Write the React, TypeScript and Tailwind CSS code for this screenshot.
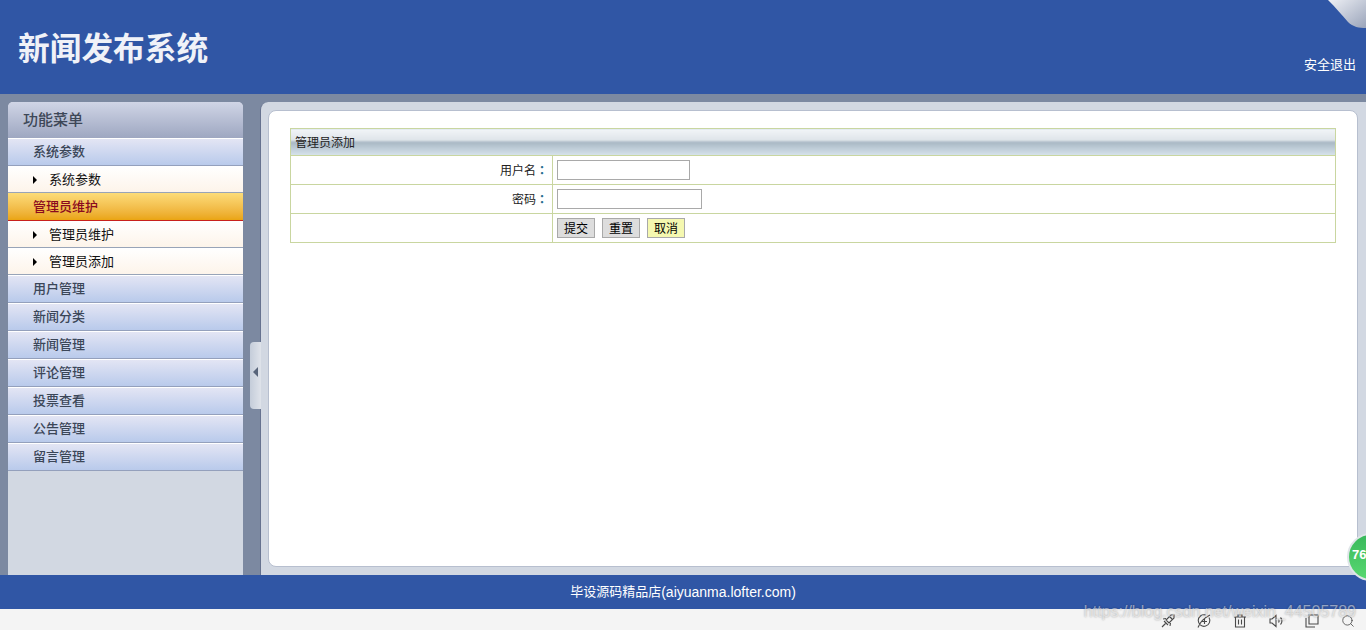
import { Search } from "lucide-react"

const font = "font-['Liberation_Sans','Noto_Sans_CJK_SC',sans-serif]"

function GroupItem({ label, active }: { label: string; active?: boolean }) {
  if (active) {
    return (
      <div className="flex h-[28px] items-center border-b border-[#c8201c] bg-gradient-to-b from-[#fcdc78] to-[#eaa50f] pl-[25px] text-[13px] font-medium text-[#8a0a1e]">
        {label}
      </div>
    )
  }
  return (
    <div className="flex h-[28px] items-center border-t border-t-white border-b border-b-[#94a0bc] bg-gradient-to-b from-[#e3e5f4] to-[#b9caeb] pl-[25px] text-[13px] font-medium text-[#3b4658]">
      {label}
    </div>
  )
}

function SubItem({ label }: { label: string }) {
  return (
    <div className="flex h-[27px] items-center border-b border-[#98a4b8] bg-gradient-to-b from-white to-[#fdf4ea] pt-px pl-[25px] text-[13px] text-[#111111]">
      <span className="mr-[12px] h-0 w-0 border-y-[4px] border-l-[4px] border-y-transparent border-l-black" />
      {label}
    </div>
  )
}

function Sidebar() {
  return (
    <aside className="mt-2 ml-2 w-[235px] shrink-0 overflow-hidden rounded-t-[5px] bg-[#d2d8e2]">
      <div className="flex h-[36px] items-center bg-gradient-to-b from-[#d0d5e6] to-[#9ea7c1] pt-px pl-[15px] text-[15px] font-medium text-[#3d4757]">
        功能菜单
      </div>
      <GroupItem label="系统参数" />
      <SubItem label="系统参数" />
      <GroupItem label="管理员维护" active />
      <SubItem label="管理员维护" />
      <SubItem label="管理员添加" />
      <GroupItem label="用户管理" />
      <GroupItem label="新闻分类" />
      <GroupItem label="新闻管理" />
      <GroupItem label="评论管理" />
      <GroupItem label="投票查看" />
      <GroupItem label="公告管理" />
      <GroupItem label="留言管理" />
    </aside>
  )
}

function Colon() {
  return <span className="font-['Noto_Sans_CJK_TC'] font-bold text-[#2a6f8f]">：</span>
}

function FormTable() {
  const cell = "border border-[#c9d6a0]"
  return (
    <table className="w-[1046px] table-fixed border-collapse text-[12px] text-[#222222]">
      <colgroup>
        <col className="w-[262px]" />
        <col />
      </colgroup>
      <tbody>
        <tr className="h-[27px]">
          <td
            colSpan={2}
            className={`${cell} bg-[linear-gradient(to_bottom,#f1f4f7_0%,#dfe5ea_40%,#a9b8c4_50%,#bccad5_70%,#d7e3ec_100%)] pt-px pl-[4px] text-[12px]`}
          >
            管理员添加
          </td>
        </tr>
        <tr className="h-[29px]">
          <td className={`${cell} pr-[4px] text-right`}>
            用户名
            <Colon />
          </td>
          <td className={`${cell} pl-1`}>
            <input className="block h-[20px] w-[133px] border border-[#a9a9a9] bg-white" />
          </td>
        </tr>
        <tr className="h-[29px]">
          <td className={`${cell} pr-[4px] text-right`}>
            密码
            <Colon />
          </td>
          <td className={`${cell} pl-1`}>
            <input type="password" className="block h-[20px] w-[145px] border border-[#a9a9a9] bg-white" />
          </td>
        </tr>
        <tr className="h-[29px]">
          <td className={cell} />
          <td className={`${cell} pl-1`}>
            <div className="flex gap-[7px]">
              <button className="h-[20px] w-[38px] border border-[#a9a9a9] bg-[#dddddd] pt-px text-[12px] text-black">提交</button>
              <button className="h-[20px] w-[38px] border border-[#a9a9a9] bg-[#dddddd] pt-px text-[12px] text-black">重置</button>
              <button className="h-[20px] w-[38px] border border-[#a9a9a9] bg-[#f5f8b0] pt-px text-[12px] text-black">取消</button>
            </div>
          </td>
        </tr>
      </tbody>
    </table>
  )
}

function BottomIcons() {
  const common = {
    fill: "none",
    stroke: "#4a4a4a",
    strokeWidth: 1.1,
    width: 16,
    height: 16,
    viewBox: "0 0 16 16",
  }
  return (
    <div className="flex h-[21px] items-center justify-end gap-[20px] bg-[#f4f4f4] pt-[3px] pr-[10px]">
      <svg {...common}>
        <path d="M6 7l5-5 3 0 0 3-5 5-3-3zM4 8l4 4M2 14l4-4M10 4l2 2M3 6l3-.5M10 13l.5-3" />
      </svg>
      <svg {...common}>
        <path d="M13 4.500a5.800 5.800 0 1 1-3.500-2.600M2 14.500C4 9 8 5 14 2M6 8.500h5M8.500 6v5" />
      </svg>
      <svg {...common}>
        <path d="M2 4h12M6 4V2h4v2M3.500 4v10h9V4M6.500 6.500v5M9.500 6.500v5" />
      </svg>
      <svg {...common}>
        <path d="M2 6v4h2l4 3.500v-11L4 6zM10.500 6.500a2.500 2.500 0 0 1 0 3M12.500 4.500a5 5 0 0 1 0 7" />
      </svg>
      <svg {...common}>
        <path d="M2 5v9h9M5 2h9v9H5z" />
      </svg>
      <div className="flex w-[16px] justify-center">
        <Search size={14} strokeWidth={1.4} color="#4a4a4a" />
      </div>
    </div>
  )
}

export default function App() {
  return (
    <div className={`relative flex h-[630px] w-[1366px] flex-col overflow-hidden bg-[#7c89a1] ${font}`}>
      <header className="relative h-[94px] shrink-0 bg-[#3056a5]">
        <h1 className="pt-[28px] pl-[18px] text-[31.7px] leading-[42px] font-bold text-[#f0f2f8]">新闻发布系统</h1>
        <a className="absolute top-[56px] right-[10px] text-[13px] leading-[18px] text-white">安全退出</a>
        <svg className="absolute top-0 right-0" width="40" height="30" viewBox="0 0 40 30">
          <defs>
            <linearGradient id="curl" x1="0" y1="0" x2="1" y2="1">
              <stop offset="0" stopColor="#eef0f5" />
              <stop offset="1" stopColor="#9aa4ba" />
            </linearGradient>
          </defs>
          <path d="M2 0C10 8 16 15 22 22C27 27 33 28 40 28V0Z" fill="url(#curl)" />
        </svg>
      </header>

      <main className="relative flex flex-1 overflow-hidden">
        <Sidebar />
        <section className="mt-2 ml-[17px] flex-1 rounded-tl-[8px] border-l border-[#66728f] bg-[#d2d8e2] py-2 pr-2 pl-[7px]">
          <div className="h-[457px] rounded-[8px] border border-[#b7bfcf] bg-white pt-[17px] pl-[21px]">
            <FormTable />
          </div>
        </section>
        <div className="absolute top-[248px] left-[250px] flex h-[67px] w-[11px] items-center justify-center rounded-l-[4px] bg-gradient-to-r from-[#c5cdda] to-[#dfe3ea] pb-[7px]">
          <span className="h-0 w-0 border-y-[5px] border-r-[5px] border-y-transparent border-r-[#58647a]" />
        </div>
      </main>

      <footer className="flex h-[34px] shrink-0 items-center justify-center bg-[#3056a5] text-[13px] text-white">
        毕设源码精品店<span className="text-[14px]">(aiyuanma.lofter.com)</span>
      </footer>
      <BottomIcons />

      <div className="absolute top-[533px] left-[1347px] flex h-[48px] w-[48px] items-center rounded-full border-2 border-[#dfe5e8] bg-gradient-to-b from-[#39b95c] to-[#58d870] pb-1 pl-[3px] text-[13px] font-bold text-white">
        76
      </div>
      <div className="pointer-events-none absolute top-[602px] right-[10px] text-[16px] leading-[20px] text-white/50 [text-shadow:0_0_2px_rgba(0,0,0,0.35)]">
        https://blog.csdn.net/weixin_44505789
      </div>
    </div>
  )
}
